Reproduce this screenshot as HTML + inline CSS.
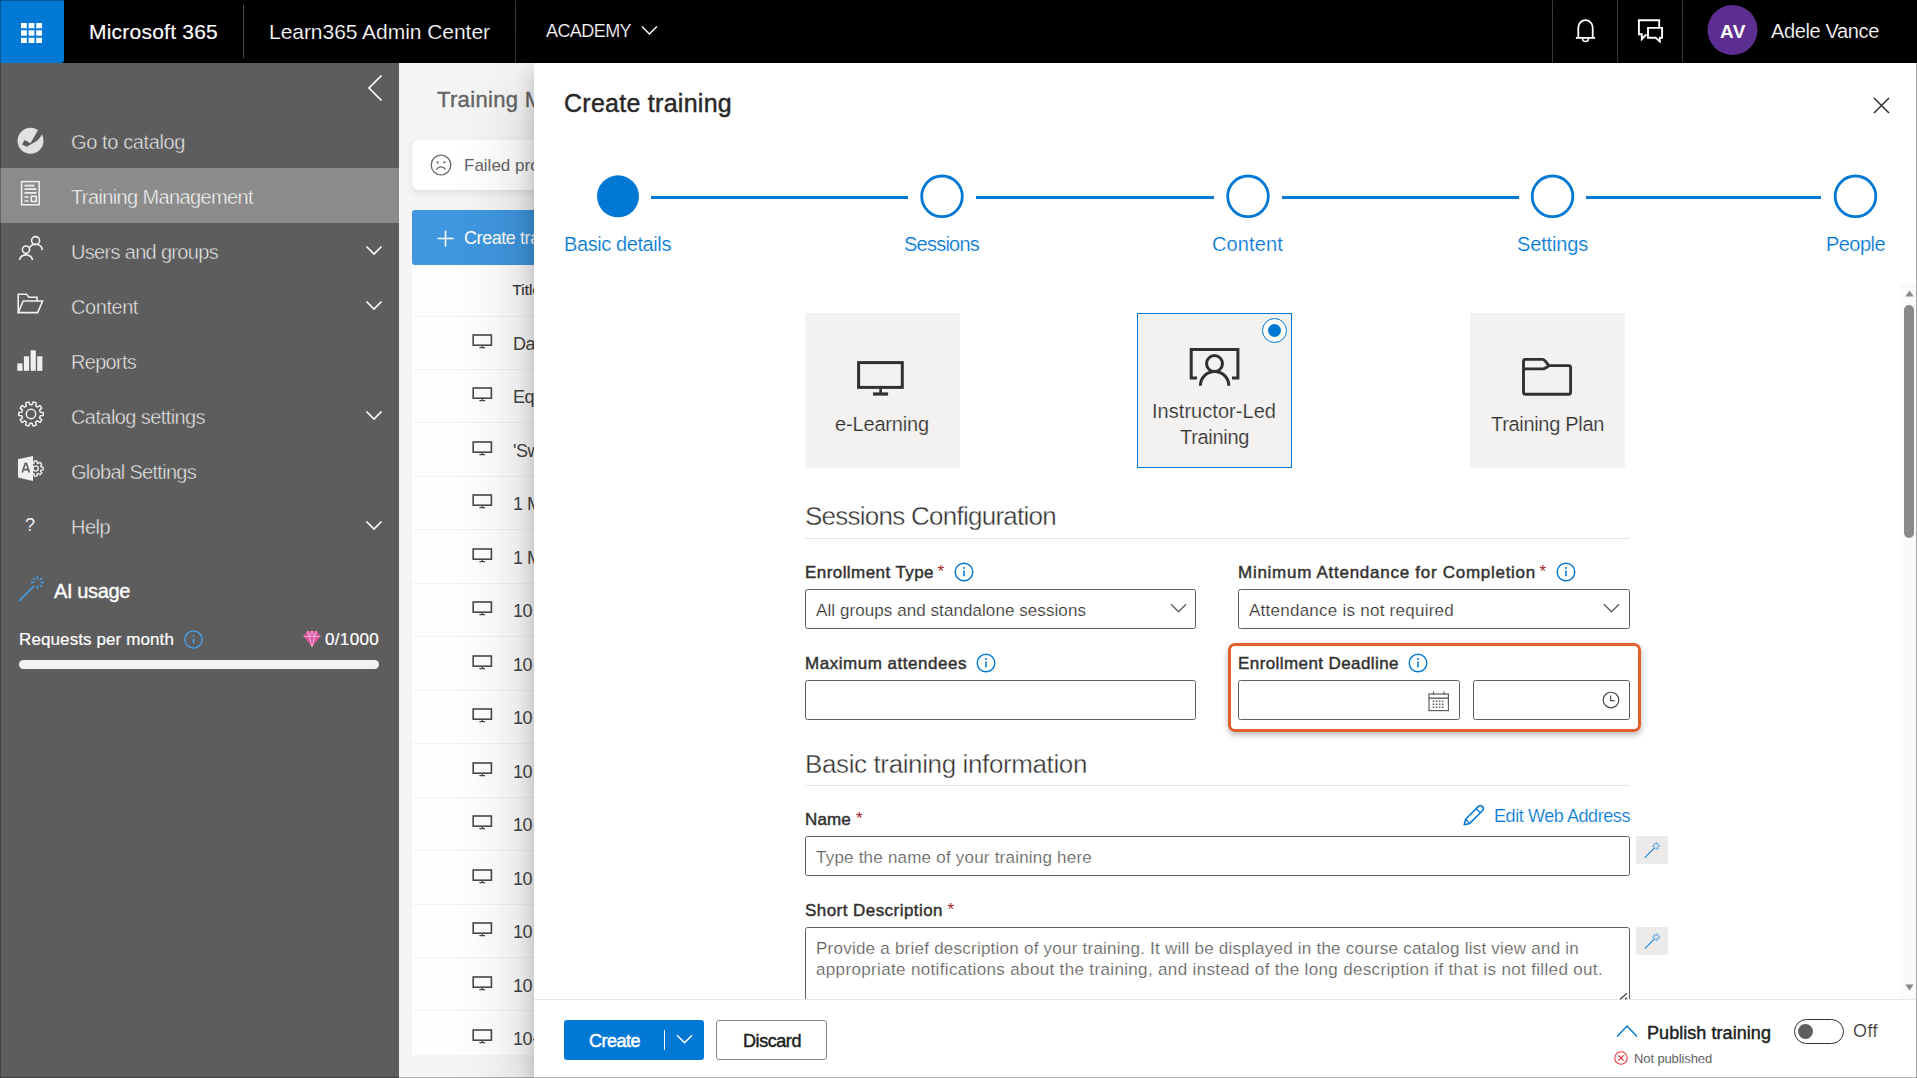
<!DOCTYPE html>
<html lang="en"><head><meta charset="utf-8"><title>Create training</title>
<style>
*{box-sizing:border-box;margin:0;padding:0}
html,body{width:1917px;height:1078px;overflow:hidden;background:#fff;font-family:"Liberation Sans",sans-serif;}
body{position:relative}
.a{position:absolute}
.t{position:absolute;white-space:nowrap;z-index:5}
svg{position:absolute;overflow:visible;z-index:5}
.inp{position:absolute;background:#fff;border:1px solid #605e5c;border-radius:2.5px;height:40px}
.hr{position:absolute;height:1px;background:#e5e5e5}
.card{position:absolute;width:155px;height:155px;background:#f3f2f1}
.wand{position:absolute;width:32px;height:28px;background:#edebe9;border-radius:2px}
.row{position:absolute;left:412px;width:130px;height:1px;background:#f3f3f3}

</style></head>
<body>
<!-- topbar -->
<div class="a" style="left:0;top:0;width:1917px;height:63px;background:#000"></div>
<div class="a" style="left:0;top:0;width:64px;height:63px;background:#0078d4;border-radius:0 0 3px 0"></div>
<svg style="left:21px;top:23px" width="21" height="21" viewBox="0 0 21 21" fill="#fff"><rect x="0" y="0" width="5.8" height="5.2"/><rect x="7.6" y="0" width="5.8" height="5.2"/><rect x="15.2" y="0" width="5.8" height="5.2"/><rect x="0" y="7.3" width="5.8" height="5.4"/><rect x="7.6" y="7.3" width="5.8" height="5.4"/><rect x="15.2" y="7.3" width="5.8" height="5.4"/><rect x="0" y="14.8" width="5.8" height="5.2"/><rect x="7.6" y="14.8" width="5.8" height="5.2"/><rect x="15.2" y="14.8" width="5.8" height="5.2"/></svg>
<div class="a" style="left:243px;top:5px;width:1px;height:53px;background:#4a4a4a"></div>
<div class="a" style="left:515px;top:0;width:1px;height:63px;background:#3a3a3a"></div>
<svg style="left:640px;top:25px" width="18" height="12" viewBox="0 0 18 12" fill="none" stroke="#fff" stroke-width="1.4"><path d="M1.9 1.6 L9.4 9.1 L16.9 1.6"/></svg>
<div class="a" style="left:1552px;top:0;width:1px;height:63px;background:#3a3a3a"></div>
<div class="a" style="left:1617px;top:0;width:1px;height:63px;background:#3a3a3a"></div>
<div class="a" style="left:1682px;top:0;width:1px;height:63px;background:#3a3a3a"></div>
<!-- bell -->
<svg style="left:1575px;top:18px" width="22" height="26" viewBox="0 0 22 26" fill="none" stroke="#fff" stroke-width="1.8"><path d="M3.3 19.8 V9.4 A7.2 7.2 0 0 1 17.7 9.4 V19.8"/><path d="M0.9 19.9 H20.1"/><path d="M7.5 20.6 A3 3 0 0 0 13.5 20.6" stroke-width="1.5"/></svg>
<!-- chat -->
<svg style="left:1637px;top:19px" width="27" height="25" viewBox="0 0 27 25" fill="none" stroke="#fff" stroke-width="1.9" stroke-linejoin="miter"><path d="M22.2 7.9 V1.2 H1.9 V15.2 H4.8 V20.2 L9.4 15.4"/><path d="M11 8.9 H25.1 V18.7 H22.8 V22.4 L18.6 18.7 H11 Z"/></svg>
<svg style="left:1700px;top:0" width="64" height="60" viewBox="0 0 64 60"><circle cx="32.5" cy="30" r="25" fill="#5c2e91"/></svg>

<!-- sidebar -->
<div class="a" style="left:0;top:63px;width:399px;height:1015px;background:#5d5d5d"></div>
<div class="a" style="left:0;top:168px;width:399px;height:55px;background:#8b8b8b"></div>
<!-- collapse chevron -->
<svg style="left:366px;top:74px" width="18" height="28" viewBox="0 0 18 28" fill="none" stroke="#fff" stroke-width="1.7"><path d="M15.5 1.5 L3 14 L15.5 26.5"/></svg>
<!-- catalog icon -->
<svg style="left:17px;top:127px" width="28" height="28" viewBox="0 0 28 28"><circle cx="13.5" cy="13.85" r="13" fill="#e1e1e1"/><path d="M7.5 13 L13.5 16.15 L20.9 3.3 L23 -0.5 L29 5 L24.4 8 Q23 11.8 19.7 14 L9.8 19.85 L5.05 17.4 Z" fill="#5d5d5d"/></svg>
<!-- training mgmt icon -->
<svg style="left:20px;top:180px" width="22" height="27" viewBox="0 0 22 27" fill="none" stroke="#f0f0f0" stroke-width="1.5"><rect x="1.6" y="1.6" width="17.6" height="23.2"/><path d="M4.5 5.6 H14.5 M4.5 9.2 H16.5 M4.5 12.8 H16.5 M4.5 17 H8.5 M4.5 21 H8.5" stroke-width="1.7"/><rect x="11.3" y="16.3" width="5" height="5.2"/></svg>
<!-- users icon -->
<svg style="left:18px;top:235px" width="26" height="26" viewBox="0 0 26 26" fill="none" stroke="#f0f0f0" stroke-width="1.6"><circle cx="17.6" cy="5.6" r="4"/><path d="M11.2 13.2 A7 7 0 0 1 24.4 15"/><circle cx="8" cy="14.6" r="3.6"/><path d="M1.4 25 A6.8 6.8 0 0 1 14.6 25"/></svg>
<!-- content folder icon -->
<svg style="left:17px;top:293px" width="27" height="21" viewBox="0 0 27 21" fill="none" stroke="#f0f0f0" stroke-width="1.6" stroke-linejoin="miter"><path d="M1.2 19.6 V1.2 H9.5 L12 4.2 H20 V8"/><path d="M1.2 19.6 L6.2 8 H25.6 L20.6 19.6 Z"/></svg>
<!-- reports icon -->
<svg style="left:17px;top:350px" width="26" height="21" viewBox="0 0 26 21" fill="#f0f0f0"><rect x="0.3" y="13.4" width="5.2" height="7.4"/><rect x="6.9" y="6.3" width="5.2" height="14.5"/><rect x="13.6" y="0.3" width="5.2" height="20.5"/><rect x="20.2" y="6.3" width="5.2" height="14.5"/></svg>
<!-- gear icon -->
<svg style="left:17.9px;top:400.5px" width="26" height="26" viewBox="0 0 26 26" fill="none" stroke="#f0f0f0" stroke-width="1.5" stroke-linejoin="round"><path d="M14.07 3.66 L15.25 0.91 L18.29 1.89 L17.62 4.82 L19.36 6.07 L21.93 4.54 L23.80 7.12 L21.55 9.10 L22.21 11.13 L25.20 11.41 L25.20 14.59 L22.21 14.87 L21.55 16.90 L23.80 18.88 L21.93 21.46 L19.36 19.93 L17.62 21.18 L18.29 24.11 L15.25 25.09 L14.07 22.34 L11.93 22.34 L10.75 25.09 L7.71 24.11 L8.38 21.18 L6.64 19.93 L4.07 21.46 L2.20 18.88 L4.45 16.90 L3.79 14.87 L0.80 14.59 L0.80 11.41 L3.79 11.13 L4.45 9.10 L2.20 7.12 L4.07 4.54 L6.64 6.07 L8.38 4.82 L7.71 1.89 L10.75 0.91 L11.93 3.66 Z"/><circle cx="13" cy="13" r="4.7"/></svg>
<!-- global settings icon -->
<svg style="left:17px;top:455px" width="28" height="27" viewBox="0 0 28 27"><g transform="translate(10.6,5.5)" fill="none" stroke="#f0f0f0" stroke-width="1.4" stroke-linejoin="round"><path d="M6.35 2.65 L6.64 0.52 L9.36 0.52 L9.65 2.65 L10.61 3.05 L12.33 1.75 L14.25 3.67 L12.95 5.39 L13.35 6.35 L15.48 6.64 L15.48 9.36 L13.35 9.65 L12.95 10.61 L14.25 12.33 L12.33 14.25 L10.61 12.95 L9.65 13.35 L9.36 15.48 L6.64 15.48 L6.35 13.35 L5.39 12.95 L3.67 14.25 L1.75 12.33 L3.05 10.61 L2.65 9.65 L0.52 9.36 L0.52 6.64 L2.65 6.35 L3.05 5.39 L1.75 3.67 L3.67 1.75 L5.39 3.05 Z"/><circle cx="8" cy="8" r="2.6"/></g><path d="M1 4.2 L16 1 V26 L1 22.6 Z" fill="#f0f0f0"/><path d="M5.2 17.6 L8.2 8.6 H9.4 L12.4 17.6 M6.3 14.6 H11.3" fill="none" stroke="#5d5d5d" stroke-width="1.6"/></svg>
<!-- chevrons -->
<svg style="left:365px;top:245px" width="18" height="12" viewBox="0 0 18 12" fill="none" stroke="#fff" stroke-width="1.6"><path d="M1.5 1.5 L9 9 L16.5 1.5"/></svg>
<svg style="left:365px;top:300px" width="18" height="12" viewBox="0 0 18 12" fill="none" stroke="#fff" stroke-width="1.6"><path d="M1.5 1.5 L9 9 L16.5 1.5"/></svg>
<svg style="left:365px;top:410px" width="18" height="12" viewBox="0 0 18 12" fill="none" stroke="#fff" stroke-width="1.6"><path d="M1.5 1.5 L9 9 L16.5 1.5"/></svg>
<svg style="left:365px;top:520px" width="18" height="12" viewBox="0 0 18 12" fill="none" stroke="#fff" stroke-width="1.6"><path d="M1.5 1.5 L9 9 L16.5 1.5"/></svg>
<!-- AI wand -->
<svg style="left:18px;top:575px" width="27" height="27" viewBox="0 0 27 27" fill="none" stroke="#4aa3ee" stroke-width="1.6" stroke-linecap="round"><path d="M1.5 25.5 L15.5 11.5"/><g stroke-width="1.3"><path d="M19.5 1.5 V3.8 M19.5 11.2 V13.5 M13.5 7.5 H15.8 M23.2 7.5 H25.5 M15.3 3.3 L16.9 4.9 M22.1 10.1 L23.7 11.7 M23.7 3.3 L22.1 4.9"/></g></svg>
<!-- info icon -->
<svg style="left:184.1px;top:629.9px" width="19" height="19" viewBox="0 0 19 19" fill="none" stroke="#4aa3ee" stroke-width="1.4"><circle cx="9.5" cy="9.5" r="8.6"/><path d="M9.5 8.3 V13.6" stroke-width="1.5"/><circle cx="9.5" cy="5.6" r="0.9" fill="#4aa3ee" stroke="none"/></svg>
<!-- gem -->
<svg style="left:302.8px;top:629.6px" width="18" height="18" viewBox="0 0 17 17"><path d="M4.2 1 H12.8 L16.5 6 L8.5 16 L0.5 6 Z" fill="#dd559f"/><path d="M0.5 6 H16.5 M4.2 1 L6 6 L8.5 16 L11 6 L12.8 1 M8.5 1 L6 6 M8.5 1 L11 6" fill="none" stroke="#f7c4de" stroke-width="0.8"/></svg>
<!-- progress -->
<div class="a" style="left:19px;top:660px;width:360px;height:9px;border-radius:5px;background:#f3f2f1"></div>

<!-- mid -->
<div class="a" style="left:399px;top:63px;width:140px;height:1015px;background:#f5f5f5"></div>
<div class="a" style="left:412px;top:140px;width:130px;height:50px;background:#fff;border-radius:7px 0 0 7px;box-shadow:0 3px 7px rgba(0,0,0,.09)"></div>
<svg style="z-index:1;left:430px;top:154px" width="22" height="22" viewBox="0 0 22 22" fill="none" stroke="#6a6a6a" stroke-width="1.3"><circle cx="11" cy="11" r="9.8"/><path d="M6.6 15.6 A5 5 0 0 1 15.4 15.6"/><circle cx="7.6" cy="8.4" r="1.1" fill="#6a6a6a" stroke="none"/><circle cx="14.4" cy="8.4" r="1.1" fill="#6a6a6a" stroke="none"/></svg>
<div class="a" style="left:412px;top:210px;width:130px;height:55px;background:#4097df;border-radius:3px 0 0 3px"></div>
<svg style="z-index:1;left:437px;top:230px" width="17" height="17" viewBox="0 0 17 17" fill="none" stroke="#fff" stroke-width="1.6"><path d="M8.5 0.5 V16.5 M0.5 8.5 H16.5"/></svg>
<div class="a" style="left:412px;top:265px;width:130px;height:790px;background:#fefefe"></div>
<div class="row" style="top:316px"></div>
<div class="row" style="top:369px"></div>
<div class="row" style="top:422px"></div>
<div class="row" style="top:476px"></div>
<div class="row" style="top:529px"></div>
<div class="row" style="top:583px"></div>
<div class="row" style="top:636px"></div>
<div class="row" style="top:690px"></div>
<div class="row" style="top:743px"></div>
<div class="row" style="top:797px"></div>
<div class="row" style="top:850px"></div>
<div class="row" style="top:904px"></div>
<div class="row" style="top:957px"></div>
<div class="row" style="top:1010px"></div>
<svg style="z-index:1;left:472px;top:334px" width="21" height="15" viewBox="0 0 21 15" fill="none" stroke="#484848" stroke-width="1.6"><rect x="1.2" y="1" width="18.2" height="10.2"/><path d="M10.3 11.2 V13.4 M7.4 13.6 H13.2" stroke-width="1.3"/></svg>
<svg style="z-index:1;left:472px;top:387px" width="21" height="15" viewBox="0 0 21 15" fill="none" stroke="#484848" stroke-width="1.6"><rect x="1.2" y="1" width="18.2" height="10.2"/><path d="M10.3 11.2 V13.4 M7.4 13.6 H13.2" stroke-width="1.3"/></svg>
<svg style="z-index:1;left:472px;top:441px" width="21" height="15" viewBox="0 0 21 15" fill="none" stroke="#484848" stroke-width="1.6"><rect x="1.2" y="1" width="18.2" height="10.2"/><path d="M10.3 11.2 V13.4 M7.4 13.6 H13.2" stroke-width="1.3"/></svg>
<svg style="z-index:1;left:472px;top:494px" width="21" height="15" viewBox="0 0 21 15" fill="none" stroke="#484848" stroke-width="1.6"><rect x="1.2" y="1" width="18.2" height="10.2"/><path d="M10.3 11.2 V13.4 M7.4 13.6 H13.2" stroke-width="1.3"/></svg>
<svg style="z-index:1;left:472px;top:548px" width="21" height="15" viewBox="0 0 21 15" fill="none" stroke="#484848" stroke-width="1.6"><rect x="1.2" y="1" width="18.2" height="10.2"/><path d="M10.3 11.2 V13.4 M7.4 13.6 H13.2" stroke-width="1.3"/></svg>
<svg style="z-index:1;left:472px;top:601px" width="21" height="15" viewBox="0 0 21 15" fill="none" stroke="#484848" stroke-width="1.6"><rect x="1.2" y="1" width="18.2" height="10.2"/><path d="M10.3 11.2 V13.4 M7.4 13.6 H13.2" stroke-width="1.3"/></svg>
<svg style="z-index:1;left:472px;top:655px" width="21" height="15" viewBox="0 0 21 15" fill="none" stroke="#484848" stroke-width="1.6"><rect x="1.2" y="1" width="18.2" height="10.2"/><path d="M10.3 11.2 V13.4 M7.4 13.6 H13.2" stroke-width="1.3"/></svg>
<svg style="z-index:1;left:472px;top:708px" width="21" height="15" viewBox="0 0 21 15" fill="none" stroke="#484848" stroke-width="1.6"><rect x="1.2" y="1" width="18.2" height="10.2"/><path d="M10.3 11.2 V13.4 M7.4 13.6 H13.2" stroke-width="1.3"/></svg>
<svg style="z-index:1;left:472px;top:762px" width="21" height="15" viewBox="0 0 21 15" fill="none" stroke="#484848" stroke-width="1.6"><rect x="1.2" y="1" width="18.2" height="10.2"/><path d="M10.3 11.2 V13.4 M7.4 13.6 H13.2" stroke-width="1.3"/></svg>
<svg style="z-index:1;left:472px;top:815px" width="21" height="15" viewBox="0 0 21 15" fill="none" stroke="#484848" stroke-width="1.6"><rect x="1.2" y="1" width="18.2" height="10.2"/><path d="M10.3 11.2 V13.4 M7.4 13.6 H13.2" stroke-width="1.3"/></svg>
<svg style="z-index:1;left:472px;top:869px" width="21" height="15" viewBox="0 0 21 15" fill="none" stroke="#484848" stroke-width="1.6"><rect x="1.2" y="1" width="18.2" height="10.2"/><path d="M10.3 11.2 V13.4 M7.4 13.6 H13.2" stroke-width="1.3"/></svg>
<svg style="z-index:1;left:472px;top:922px" width="21" height="15" viewBox="0 0 21 15" fill="none" stroke="#484848" stroke-width="1.6"><rect x="1.2" y="1" width="18.2" height="10.2"/><path d="M10.3 11.2 V13.4 M7.4 13.6 H13.2" stroke-width="1.3"/></svg>
<svg style="z-index:1;left:472px;top:976px" width="21" height="15" viewBox="0 0 21 15" fill="none" stroke="#484848" stroke-width="1.6"><rect x="1.2" y="1" width="18.2" height="10.2"/><path d="M10.3 11.2 V13.4 M7.4 13.6 H13.2" stroke-width="1.3"/></svg>
<svg style="z-index:1;left:472px;top:1029px" width="21" height="15" viewBox="0 0 21 15" fill="none" stroke="#484848" stroke-width="1.6"><rect x="1.2" y="1" width="18.2" height="10.2"/><path d="M10.3 11.2 V13.4 M7.4 13.6 H13.2" stroke-width="1.3"/></svg>

<!-- panel -->
<div class="a" id="pw" style="left:0;top:0;width:1917px;height:1078px;z-index:3">
<div class="a" style="left:534px;top:63px;width:1383px;height:1015px;background:#fff;box-shadow:0 6px 18px rgba(0,0,0,.18),0 32px 72px rgba(0,0,0,.22)"></div>
<!-- close X -->
<svg style="left:1873px;top:96.5px" width="17" height="17" viewBox="0 0 17 17" fill="none" stroke="#323130" stroke-width="1.5"><path d="M1 1 L16 16 M16 1 L1 16"/></svg>
<!-- stepper -->
<div class="a" style="left:651px;top:196px;width:257px;height:3px;background:#0078d4"></div>
<div class="a" style="left:976px;top:196px;width:238px;height:3px;background:#0078d4"></div>
<div class="a" style="left:1282px;top:196px;width:237px;height:3px;background:#0078d4"></div>
<div class="a" style="left:1586px;top:196px;width:235px;height:3px;background:#0078d4"></div>
<svg style="left:590px;top:170px" width="1300" height="54" viewBox="0 0 1300 54"><circle cx="28" cy="26.3" r="21" fill="#0078d4"/><g fill="#fff" stroke="#0078d4" stroke-width="2.8"><circle cx="352" cy="26.3" r="20.3"/><circle cx="658" cy="26.3" r="20.3"/><circle cx="962.5" cy="26.3" r="20.3"/><circle cx="1265.5" cy="26.3" r="20.3"/></g></svg>
<!-- scrollbar -->
<div class="a" style="left:1900px;top:283px;width:17px;height:716px;background:#fafafa"></div>
<div class="a" style="left:1904px;top:305px;width:10px;height:233px;border-radius:5px;background:#8a8a8a"></div>
<svg style="left:1905px;top:290px" width="9" height="7" viewBox="0 0 9 7"><path d="M0.3 6.5 L4.5 0.5 L8.7 6.5 Z" fill="#8a8a8a"/></svg>
<svg style="left:1905px;top:984px" width="9" height="7" viewBox="0 0 9 7"><path d="M0.3 0.5 L4.5 6.5 L8.7 0.5 Z" fill="#8a8a8a"/></svg>
<!-- cards -->
<div class="card" style="left:805px;top:313px"></div>
<div class="card" style="left:1137px;top:313px;border:1px solid #0078d4"></div>
<div class="card" style="left:1470px;top:313px"></div>
<!-- monitor icon -->
<svg style="left:856px;top:361px" width="49" height="36" viewBox="0 0 49 36" fill="none" stroke="#323130" stroke-width="3"><rect x="2.6" y="1.6" width="43.7" height="24.8"/><path d="M24.6 27.9 V32.2" stroke-width="2.6"/><path d="M17 33 H32.1" stroke-width="3.2"/></svg>
<!-- ILT icon -->
<svg style="left:1188px;top:347px" width="52" height="40" viewBox="0 0 52 40" fill="none" stroke="#323130" stroke-width="3"><path d="M9 31 H3.2 V2.4 H49.9 V31 H44"/><circle cx="26.5" cy="16.6" r="8"/><path d="M12.4 38.7 A14.2 14.2 0 0 1 40.8 38.7"/></svg>
<!-- radio -->
<div class="a" style="left:1262px;top:318px;width:25px;height:25px;border-radius:50%;border:1px solid #0078d4;background:#fff"></div>
<div class="a" style="left:1268px;top:324px;width:13px;height:13px;border-radius:50%;background:#0078d4"></div>
<!-- folder icon -->
<svg style="left:1521px;top:357px" width="52" height="40" viewBox="0 0 52 40" fill="none" stroke="#323130" stroke-width="2.9" stroke-linejoin="round"><path d="M2.5 11.9 H21.5 Q23.5 11.9 25 10.7 L28.3 8.6 H47.6 Q49.6 8.6 49.6 10.6 V35.3 Q49.6 37.3 47.6 37.3 H4.5 Q2.5 37.3 2.5 35.3 V4.4 Q2.5 2.4 4.5 2.4 H21 Q23 2.4 24.2 4 L27.3 8 Q27.8 8.6 28.8 8.6"/></svg>
<!-- section rules -->
<div class="hr" style="left:805px;top:538px;width:825px"></div>
<div class="hr" style="left:805px;top:785px;width:825px"></div>
<!-- inputs -->
<div class="inp" style="left:805px;top:589px;width:391px"></div>
<div class="inp" style="left:1238px;top:589px;width:392px"></div>
<div class="inp" style="left:805px;top:680px;width:391px"></div>
<svg style="left:1170px;top:603px" width="17" height="11" viewBox="0 0 17 11" fill="none" stroke="#605e5c" stroke-width="1.3"><path d="M1 1.2 L8.5 8.8 L16 1.2"/></svg>
<svg style="left:1603px;top:603px" width="17" height="11" viewBox="0 0 17 11" fill="none" stroke="#605e5c" stroke-width="1.3"><path d="M1 1.2 L8.5 8.8 L16 1.2"/></svg>
<!-- highlight box -->
<div class="a" style="left:1228px;top:643px;width:413px;height:89px;border:3px solid #e1602c;border-radius:7px;box-shadow:0 3px 6px rgba(0,0,0,.28)"></div>
<div class="inp" style="left:1238px;top:680px;width:222px"></div>
<div class="inp" style="left:1473px;top:680px;width:157px"></div>
<!-- calendar icon -->
<svg style="left:1427.6px;top:690.6px" width="22" height="21" viewBox="0 0 22 21" fill="none" stroke="#605e5c" stroke-width="1.2"><rect x="1" y="3" width="19.4" height="16.6"/><path d="M1 7.2 H20.4" stroke-width="1.4"/><path d="M5.5 0.5 V4 M16 0.5 V4"/><path d="M4.6 10.2 H17 M4.6 13.2 H17 M4.6 16.2 H17" stroke-width="1.5" stroke-dasharray="1.6 1.5"/></svg>
<!-- clock icon -->
<svg style="left:1602px;top:691.3px" width="18" height="18" viewBox="0 0 18 18" fill="none" stroke="#484644" stroke-width="1.15"><circle cx="9" cy="9" r="7.8"/><path d="M8.6 4.6 V9.6 H12.6"/></svg>
<!-- info icons -->
<svg class="info" style="left:954px;top:561.6px" width="20" height="20" viewBox="0 0 20 20" fill="none" stroke="#0078d4" stroke-width="1.4"><circle cx="10" cy="10" r="8.8"/><path d="M10 8.6 V14.2" stroke-width="1.6"/><circle cx="10" cy="5.9" r="1" fill="#0078d4" stroke="none"/></svg>
<svg class="info" style="left:1556px;top:561.6px" width="20" height="20" viewBox="0 0 20 20" fill="none" stroke="#0078d4" stroke-width="1.4"><circle cx="10" cy="10" r="8.8"/><path d="M10 8.6 V14.2" stroke-width="1.6"/><circle cx="10" cy="5.9" r="1" fill="#0078d4" stroke="none"/></svg>
<svg class="info" style="left:976px;top:652.6px" width="20" height="20" viewBox="0 0 20 20" fill="none" stroke="#0078d4" stroke-width="1.4"><circle cx="10" cy="10" r="8.8"/><path d="M10 8.6 V14.2" stroke-width="1.6"/><circle cx="10" cy="5.9" r="1" fill="#0078d4" stroke="none"/></svg>
<svg class="info" style="left:1408px;top:652.6px" width="20" height="20" viewBox="0 0 20 20" fill="none" stroke="#0078d4" stroke-width="1.4"><circle cx="10" cy="10" r="8.8"/><path d="M10 8.6 V14.2" stroke-width="1.6"/><circle cx="10" cy="5.9" r="1" fill="#0078d4" stroke="none"/></svg>
<!-- pencil -->
<svg style="left:1462px;top:804px" width="23" height="23" viewBox="0 0 23 23" fill="none" stroke="#0078d4" stroke-width="1.5" stroke-linejoin="round"><path d="M2.2 20.8 L3.6 15.2 L16.2 2.6 A2.3 2.3 0 0 1 20.4 6.8 L7.8 19.4 Z"/><path d="M14.2 4.6 L18.4 8.8 M3.6 15.2 L7.8 19.4" stroke-width="1.3"/></svg>
<!-- name input + wand -->
<div class="inp" style="left:805px;top:836px;width:825px"></div>
<div class="wand" style="left:1636px;top:836px"></div>
<svg style="left:1643.6px;top:839.7px" width="18" height="18" viewBox="0 0 18 18" fill="none" stroke="#2b88d8" stroke-width="1.15" stroke-linecap="round"><path d="M1 17.3 L10.5 7.8"/><g stroke-width="0.95"><path d="M12.2 4.2 V2.4 M12.2 8 V9.8 M10.3 6.1 H8.5 M14.1 6.1 H15.9 M10.86 4.76 L9.6 3.5 M13.54 4.76 L14.8 3.5 M13.54 7.44 L14.8 8.7"/></g></svg>
<!-- short description textarea + wand -->
<div class="inp" style="left:805px;top:927px;width:825px;height:80px"></div>
<div class="wand" style="left:1636px;top:927px"></div>
<svg style="left:1643.6px;top:930.7px" width="18" height="18" viewBox="0 0 18 18" fill="none" stroke="#2b88d8" stroke-width="1.15" stroke-linecap="round"><path d="M1 17.3 L10.5 7.8"/><g stroke-width="0.95"><path d="M12.2 4.2 V2.4 M12.2 8 V9.8 M10.3 6.1 H8.5 M14.1 6.1 H15.9 M10.86 4.76 L9.6 3.5 M13.54 4.76 L14.8 3.5 M13.54 7.44 L14.8 8.7"/></g></svg>
<svg style="left:1619px;top:991px" width="10" height="9" viewBox="0 0 10 9" fill="none" stroke="#323130" stroke-width="1.2"><path d="M1 8.2 L8 2.4 M6.2 8.2 L8 6.8"/></svg>
<!-- footer -->
<div class="a" style="left:534px;top:999px;width:1383px;height:79px;background:#fff;border-top:1px solid #e8e8e8;z-index:4"></div>
<div class="a" style="left:564px;top:1020px;width:140px;height:40px;background:#0078d4;border-radius:3px;z-index:4"></div>
<div class="a" style="left:664px;top:1030px;width:1px;height:20px;background:#fff;z-index:5"></div>
<svg style="left:676px;top:1034px" width="17" height="11" viewBox="0 0 17 11" fill="none" stroke="#fff" stroke-width="1.5"><path d="M1 1.2 L8.5 8.8 L16 1.2"/></svg>
<div class="a" style="left:716px;top:1020px;width:111px;height:40px;background:#fff;border:1px solid #8a8886;border-radius:3px;z-index:4"></div>
<!-- publish -->
<svg style="left:1616px;top:1024px" width="22" height="14" viewBox="0 0 22 14" fill="none" stroke="#0078d4" stroke-width="1.4"><path d="M1 12.5 L11 2 L21 12.5"/></svg>
<div class="a" style="left:1794px;top:1019px;width:50px;height:25px;border:1px solid #323130;border-radius:13px;background:#fff;z-index:5"></div>
<div class="a" style="left:1797.8px;top:1024px;width:15px;height:15px;border-radius:50%;background:#605e5c;z-index:6"></div>
<svg style="left:1614.4px;top:1051px" width="14" height="14" viewBox="0 0 14 14" fill="none" stroke="#e0383e" stroke-width="1.1"><circle cx="7" cy="7" r="6.2"/><path d="M4.4 4.4 L9.6 9.6 M9.6 4.4 L4.4 9.6" stroke-width="1.3"/></svg>
</div>

<!-- text -->
<span class="t" id="tb1" style="left:89px;top:17.8px;font-size:21px;line-height:27px;color:#fff;-webkit-text-stroke:0.15px #fff;letter-spacing:0.226px;">Microsoft 365</span>
<span class="t" id="tb2" style="left:269px;top:17.8px;font-size:21px;line-height:27px;color:#fff;-webkit-text-stroke:0.2px #000;letter-spacing:-0.039px;">Learn365 Admin Center</span>
<span class="t" id="tb3" style="left:546px;top:19.8px;font-size:18px;line-height:23px;color:#fff;-webkit-text-stroke:0.2px #000;letter-spacing:-0.574px;">ACADEMY</span>
<span class="t" id="tb4" style="left:1720px;top:18.5px;font-size:19px;line-height:25px;color:#fff;font-weight:700;letter-spacing:0.508px;">AV</span>
<span class="t" id="tb5" style="left:1771px;top:18.0px;font-size:20px;line-height:26px;color:#fff;-webkit-text-stroke:0.2px #000;letter-spacing:-0.358px;">Adele Vance</span>
<span class="t" id="nv1" style="left:71px;top:129.0px;font-size:20px;line-height:26px;color:#f0f0f0;-webkit-text-stroke:0.5px #5d5d5d;letter-spacing:-0.382px;">Go to catalog</span>
<span class="t" id="nv2" style="left:71px;top:184.0px;font-size:20px;line-height:26px;color:#fff;-webkit-text-stroke:0.5px #8b8b8b;letter-spacing:-0.622px;">Training Management</span>
<span class="t" id="nv3" style="left:71px;top:239.0px;font-size:20px;line-height:26px;color:#f0f0f0;-webkit-text-stroke:0.5px #5d5d5d;letter-spacing:-0.680px;">Users and groups</span>
<span class="t" id="nv4" style="left:71px;top:294.0px;font-size:20px;line-height:26px;color:#f0f0f0;-webkit-text-stroke:0.5px #5d5d5d;letter-spacing:-0.438px;">Content</span>
<span class="t" id="nv5" style="left:71px;top:349.0px;font-size:20px;line-height:26px;color:#f0f0f0;-webkit-text-stroke:0.5px #5d5d5d;letter-spacing:-0.719px;">Reports</span>
<span class="t" id="nv6" style="left:71px;top:404.0px;font-size:20px;line-height:26px;color:#f0f0f0;-webkit-text-stroke:0.5px #5d5d5d;letter-spacing:-0.589px;">Catalog settings</span>
<span class="t" id="nv7" style="left:71px;top:459.0px;font-size:20px;line-height:26px;color:#f0f0f0;-webkit-text-stroke:0.5px #5d5d5d;letter-spacing:-0.709px;">Global Settings</span>
<span class="t" id="nv8" style="left:71px;top:514.0px;font-size:20px;line-height:26px;color:#f0f0f0;-webkit-text-stroke:0.5px #5d5d5d;letter-spacing:-0.535px;">Help</span>
<span class="t" id="nvq" style="left:25px;top:513.5px;font-size:18px;line-height:23px;color:#f0f0f0;">?</span>
<span class="t" id="ai1" style="left:54px;top:578.0px;font-size:20px;line-height:26px;color:#fff;-webkit-text-stroke:0.35px #fff;letter-spacing:-0.369px;">AI usage</span>
<span class="t" id="ai2" style="left:19px;top:628.5px;font-size:17px;line-height:22px;color:#fff;-webkit-text-stroke:0.2px #fff;letter-spacing:0.106px;">Requests per month</span>
<span class="t" id="ai3" style="left:325px;top:628.5px;font-size:17px;line-height:22px;color:#fff;-webkit-text-stroke:0.2px #fff;letter-spacing:0.333px;">0/1000</span>
<span class="t" id="md1" style="left:437px;top:84.5px;font-size:22px;line-height:29px;color:#666;-webkit-text-stroke:0.4px #666;letter-spacing:0.337px;z-index:1;">Training Management</span>
<span class="t" id="md2" style="left:464px;top:155.0px;font-size:17px;line-height:22px;color:#666;z-index:1;">Failed processes</span>
<span class="t" id="md3" style="left:464px;top:227.0px;font-size:18px;line-height:23px;color:#fff;letter-spacing:-0.433px;z-index:1;">Create training</span>
<span class="t" id="md4" style="left:512.5px;top:280.0px;font-size:15px;line-height:20px;color:#333;-webkit-text-stroke:0.2px #333;letter-spacing:0.167px;z-index:1;">Title</span>
<span class="t" id="rw0" style="left:513px;top:332.5px;font-size:18px;line-height:23px;color:#444;letter-spacing:-0.575px;z-index:1;">Da</span>
<span class="t" id="rw1" style="left:513px;top:385.5px;font-size:18px;line-height:23px;color:#444;letter-spacing:-0.551px;z-index:1;">Eq</span>
<span class="t" id="rw2" style="left:513px;top:439.5px;font-size:18px;line-height:23px;color:#444;letter-spacing:-0.474px;z-index:1;">'Sw</span>
<span class="t" id="rw3" style="left:513px;top:492.5px;font-size:18px;line-height:23px;color:#444;letter-spacing:-0.500px;z-index:1;">1 M</span>
<span class="t" id="rw4" style="left:513px;top:546.5px;font-size:18px;line-height:23px;color:#444;letter-spacing:-0.500px;z-index:1;">1 M</span>
<span class="t" id="rw5" style="left:513px;top:599.5px;font-size:18px;line-height:23px;color:#444;letter-spacing:-0.501px;z-index:1;">10</span>
<span class="t" id="rw6" style="left:513px;top:653.5px;font-size:18px;line-height:23px;color:#444;letter-spacing:-0.501px;z-index:1;">10</span>
<span class="t" id="rw7" style="left:513px;top:706.5px;font-size:18px;line-height:23px;color:#444;letter-spacing:-0.501px;z-index:1;">10</span>
<span class="t" id="rw8" style="left:513px;top:760.5px;font-size:18px;line-height:23px;color:#444;letter-spacing:-0.501px;z-index:1;">10</span>
<span class="t" id="rw9" style="left:513px;top:813.5px;font-size:18px;line-height:23px;color:#444;letter-spacing:-0.501px;z-index:1;">10</span>
<span class="t" id="rw10" style="left:513px;top:867.5px;font-size:18px;line-height:23px;color:#444;letter-spacing:-0.501px;z-index:1;">10</span>
<span class="t" id="rw11" style="left:513px;top:920.5px;font-size:18px;line-height:23px;color:#444;letter-spacing:-0.501px;z-index:1;">10</span>
<span class="t" id="rw12" style="left:513px;top:974.5px;font-size:18px;line-height:23px;color:#444;letter-spacing:-0.501px;z-index:1;">10</span>
<span class="t" id="rw13" style="left:513px;top:1027.5px;font-size:18px;line-height:23px;color:#444;letter-spacing:-0.434px;z-index:1;">10-</span>
<span class="t" id="ph1" style="left:564px;top:87.0px;font-size:25px;line-height:32px;color:#292827;-webkit-text-stroke:0.45px #292827;letter-spacing:0.268px;">Create training</span>
<span class="t" id="st1" style="left:564px;top:231.0px;font-size:20px;line-height:26px;color:#0078d4;-webkit-text-stroke:0.2px #fff;letter-spacing:-0.406px;">Basic details</span>
<span class="t" id="st2" style="left:904px;top:231.0px;font-size:20px;line-height:26px;color:#0078d4;-webkit-text-stroke:0.2px #fff;letter-spacing:-0.770px;">Sessions</span>
<span class="t" id="st3" style="left:1212px;top:231.0px;font-size:20px;line-height:26px;color:#0078d4;-webkit-text-stroke:0.2px #fff;letter-spacing:0.134px;">Content</span>
<span class="t" id="st4" style="left:1517px;top:231.0px;font-size:20px;line-height:26px;color:#0078d4;-webkit-text-stroke:0.2px #fff;letter-spacing:-0.158px;">Settings</span>
<span class="t" id="st5" style="left:1826px;top:231.0px;font-size:20px;line-height:26px;color:#0078d4;-webkit-text-stroke:0.2px #fff;letter-spacing:-0.547px;">People</span>
<span class="t" id="cd1" style="left:835px;top:411.0px;font-size:20px;line-height:26px;color:#323130;-webkit-text-stroke:0.2px #f3f2f1;letter-spacing:-0.163px;">e-Learning</span>
<span class="t" id="cd2" style="left:1152px;top:398.0px;font-size:20px;line-height:26px;color:#323130;-webkit-text-stroke:0.2px #f3f2f1;letter-spacing:0.044px;">Instructor-Led</span>
<span class="t" id="cd3" style="left:1180px;top:424.0px;font-size:20px;line-height:26px;color:#323130;-webkit-text-stroke:0.2px #f3f2f1;letter-spacing:-0.314px;">Training</span>
<span class="t" id="cd4" style="left:1491px;top:411.0px;font-size:20px;line-height:26px;color:#323130;-webkit-text-stroke:0.2px #f3f2f1;letter-spacing:-0.316px;">Training Plan</span>
<span class="t" id="h1" style="left:805px;top:499.0px;font-size:26px;line-height:34px;color:#323130;-webkit-text-stroke:0.4px #fff;letter-spacing:-0.745px;">Sessions Configuration</span>
<span class="t" id="h2" style="left:805px;top:746.5px;font-size:26px;line-height:34px;color:#323130;-webkit-text-stroke:0.4px #fff;letter-spacing:-0.382px;">Basic training information</span>
<span class="t" id="lb1" style="left:805px;top:561.8px;font-size:17px;line-height:22px;color:#323130;-webkit-text-stroke:0.45px #323130;letter-spacing:0.431px;">Enrollment Type</span>
<span class="t" id="lb1s" style="left:937.5px;top:561.0px;font-size:17px;line-height:22px;color:#a4262c;">*</span>
<span class="t" id="lb2" style="left:1238px;top:561.8px;font-size:17px;line-height:22px;color:#323130;-webkit-text-stroke:0.45px #323130;letter-spacing:0.726px;">Minimum Attendance for Completion</span>
<span class="t" id="lb2s" style="left:1539.5px;top:561.0px;font-size:17px;line-height:22px;color:#a4262c;">*</span>
<span class="t" id="lb3" style="left:805px;top:652.8px;font-size:17px;line-height:22px;color:#323130;-webkit-text-stroke:0.45px #323130;letter-spacing:0.525px;">Maximum attendees</span>
<span class="t" id="lb4" style="left:1238px;top:652.8px;font-size:17px;line-height:22px;color:#323130;-webkit-text-stroke:0.45px #323130;letter-spacing:0.416px;">Enrollment Deadline</span>
<span class="t" id="lb5" style="left:805px;top:808.8px;font-size:17px;line-height:22px;color:#323130;-webkit-text-stroke:0.45px #323130;letter-spacing:0.160px;">Name</span>
<span class="t" id="lb5s" style="left:856px;top:808.0px;font-size:17px;line-height:22px;color:#a4262c;">*</span>
<span class="t" id="lb6" style="left:805px;top:899.8px;font-size:17px;line-height:22px;color:#323130;-webkit-text-stroke:0.45px #323130;letter-spacing:0.448px;">Short Description</span>
<span class="t" id="lb6s" style="left:947.5px;top:899.0px;font-size:17px;line-height:22px;color:#a4262c;">*</span>
<span class="t" id="fv1" style="left:816px;top:599.5px;font-size:17px;line-height:22px;color:#323130;-webkit-text-stroke:0.2px #fff;letter-spacing:0.075px;">All groups and standalone sessions</span>
<span class="t" id="fv2" style="left:1249px;top:599.5px;font-size:17px;line-height:22px;color:#323130;-webkit-text-stroke:0.2px #fff;letter-spacing:0.251px;">Attendance is not required</span>
<span class="t" id="fv3" style="left:816px;top:846.7px;font-size:17px;line-height:22px;color:#605e5c;-webkit-text-stroke:0.2px #fff;letter-spacing:0.217px;">Type the name of your training here</span>
<span class="t" id="fv4" style="left:816px;top:938.0px;font-size:17px;line-height:22px;color:#605e5c;-webkit-text-stroke:0.2px #fff;letter-spacing:0.238px;">Provide a brief description of your training. It will be displayed in the course catalog list view and in</span>
<span class="t" id="fv5" style="left:816px;top:959.0px;font-size:17px;line-height:22px;color:#605e5c;-webkit-text-stroke:0.2px #fff;letter-spacing:0.348px;">appropriate notifications about the training, and instead of the long description if that is not filled out.</span>
<span class="t" id="lk1" style="left:1494px;top:804.5px;font-size:18px;line-height:23px;color:#0078d4;-webkit-text-stroke:0.2px #fff;letter-spacing:-0.422px;">Edit Web Address</span>
<span class="t" id="bt1" style="left:589px;top:1029.5px;font-size:18px;line-height:23px;color:#fff;-webkit-text-stroke:0.45px #fff;letter-spacing:-0.505px;">Create</span>
<span class="t" id="bt2" style="left:743px;top:1029.5px;font-size:18px;line-height:23px;color:#201f1e;-webkit-text-stroke:0.45px #201f1e;letter-spacing:-0.431px;">Discard</span>
<span class="t" id="pb1" style="left:1647px;top:1021.5px;font-size:18px;line-height:23px;color:#201f1e;-webkit-text-stroke:0.45px #201f1e;letter-spacing:0.058px;">Publish training</span>
<span class="t" id="pb2" style="left:1853px;top:1019.5px;font-size:18px;line-height:23px;color:#323130;-webkit-text-stroke:0.2px #fff;letter-spacing:0.438px;">Off</span>
<span class="t" id="pb3" style="left:1634px;top:1049.5px;font-size:13px;line-height:17px;color:#323130;-webkit-text-stroke:0.2px #fff;letter-spacing:-0.115px;">Not published</span>
<div class="a" style="left:0;top:0;width:1px;height:1078px;background:rgba(0,0,0,.28);z-index:20"></div>
<div class="a" style="left:0;top:0;width:1917px;height:1px;background:rgba(0,0,0,.28);z-index:20"></div>
<div class="a" style="left:1916px;top:63px;width:1px;height:1015px;background:#a8a8a8;z-index:20"></div>
<div class="a" style="left:0;top:1077px;width:1917px;height:1px;background:rgba(0,0,0,.28);z-index:20"></div>

</body></html>
